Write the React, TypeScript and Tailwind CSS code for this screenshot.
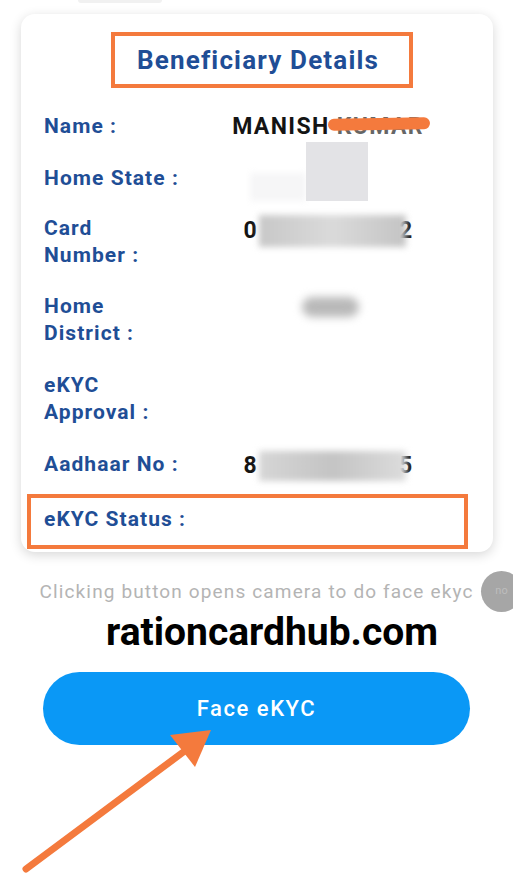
import React from "react";

const LABEL = "text-[21px] font-bold leading-[27px] tracking-[0.05em] text-[#1f4e96]";
const VALUE = "text-[23px] font-bold leading-[27px] tracking-[0.06em] text-[#141414]";

function Row({ label, children, className = "" }: { label: React.ReactNode; children?: React.ReactNode; className?: string }) {
  return (
    <div className={`grid grid-cols-[146px_280px] ${className}`}>
      <div className={LABEL}>{label}</div>
      <div className={`${VALUE} relative text-center`}>{children}</div>
    </div>
  );
}

export default function App() {
  return (
    <div className="relative w-[513px] h-[893px] overflow-hidden bg-white font-['Roboto',sans-serif]">
      {/* faint edge of element above */}
      <div className="absolute left-[78px] top-0 h-[3px] w-[84px] rounded-b bg-[#f1f1f1]" />

      <div className="pt-[14px] pl-[21px]">
        <div className="flex h-[538px] w-[472px] flex-col rounded-[14px] bg-white shadow-[0_3px_12px_rgba(0,0,0,0.16)]">
          <div className="mt-[18px] ml-[90px] flex h-[56px] w-[302px] items-center justify-center border-4 border-[#f47a3d]">
            <h1 className="-ml-[8px] text-[26px] font-bold tracking-[0.045em] text-[#1f4e96]">Beneficiary Details</h1>
          </div>

          <div className="flex flex-col pl-[23px]">
            <Row label="Name :" className="mt-[24.5px]">
              <span className="relative -ml-[4px]">
                MANISH <span className="text-[#666]">KUMAR</span>
                <span className="absolute right-[-6px] top-[5px] h-[12px] w-[102px] -rotate-1 rounded-full bg-[#f47a3d]" />
              </span>
            </Row>

            <Row label="Home State :" className="mt-[25px]">
              <span className="absolute left-[60px] top-[8px] h-[28px] w-[56px] bg-[#f6f6f7] blur-[3px]" />
              <span className="absolute left-[116px] top-[-23px] h-[59px] w-[62px] bg-[#e3e3e6]" />
            </Row>

            <Row label={<>Card<br />Number :</>} className="mt-[23px]">
              <span className="-ml-[3px] inline-flex items-center">
                0
                <span className="mx-[1px] inline-block h-[32px] w-[147px] bg-gradient-to-r from-[#c8c8c8] via-[#dadada] to-[#c4c4c4] blur-[3px]" />
                <span className="-ml-[8px]">2</span>
              </span>
            </Row>

            <Row label={<>Home<br />District :</>} className="mt-[24px]">
              <span className="mt-[4px] inline-block h-[20px] w-[57px] rounded-full bg-[#b9b9b9] blur-[4px]" />
            </Row>

            <Row label={<>eKYC<br />Approval :</>} className="mt-[25px]" />

            <Row label="Aadhaar No :" className="mt-[25px]">
              <span className="-ml-[3px] inline-flex items-center">
                8
                <span className="mx-[1px] inline-block h-[30px] w-[147px] bg-gradient-to-r from-[#d6d6d6] via-[#c4c4c4] to-[#dcdcdc] blur-[3px]" />
                <span className="-ml-[8px]">5</span>
              </span>
            </Row>

            <div className="mt-[13.5px] -ml-[17px] h-[55px] w-[441px] border-4 border-[#f47a3d] pl-[13px] pt-[7.5px]">
              <div className={LABEL}>eKYC Status :</div>
            </div>
          </div>
        </div>
      </div>

      <p className="mt-[28px] text-center text-[19px] leading-[24px] tracking-[0.06em] text-[#b4b4b4]">
        Clicking button opens camera to do face ekyc
      </p>

      <div className="mt-[4.7px] pl-[106px] text-[39px] font-bold leading-[46px] text-black">rationcardhub.com</div>

      <button className="mt-[17.3px] ml-[43px] flex h-[73px] w-[427px] items-center justify-center rounded-full bg-[#0a98f6] text-[22px] font-medium tracking-[0.07em] text-white">
        Face eKYC
      </button>

      {/* grey floating circle */}
      <div className="absolute left-[481px] top-[571px] flex h-[41px] w-[41px] items-center justify-center rounded-full bg-[#a6a6a6] text-[11px] text-[#bdbdbd]">
        no
      </div>

      {/* annotation arrow */}
      <svg className="absolute left-0 top-0" width="513" height="893" viewBox="0 0 513 893">
        <line x1="26" y1="869" x2="186" y2="750" stroke="#f47a3d" strokeWidth="7" strokeLinecap="round" />
        <polygon points="170,735 211,730 195,767" fill="#f47a3d" />
      </svg>
    </div>
  );
}
